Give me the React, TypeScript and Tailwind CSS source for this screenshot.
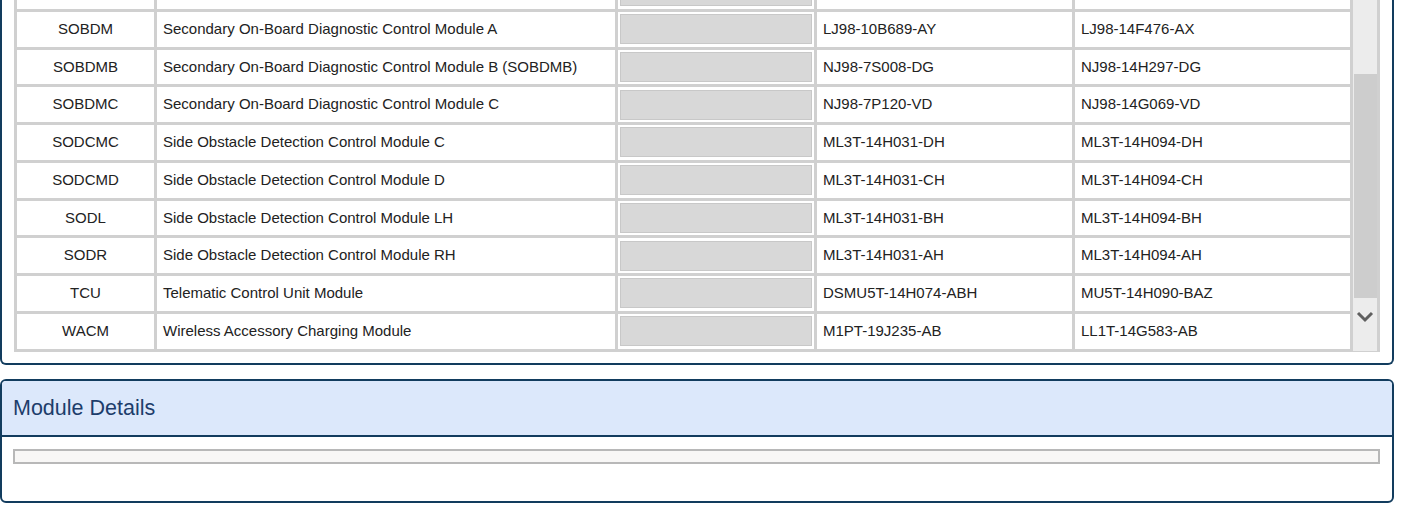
import React from "react";

type ModuleRow = {
  code: string;
  name: string;
  partNo: string;
  strategy: string;
};

const rows: ModuleRow[] = [
  { code: "SOBDM", name: "Secondary On-Board Diagnostic Control Module A", partNo: "LJ98-10B689-AY", strategy: "LJ98-14F476-AX" },
  { code: "SOBDMB", name: "Secondary On-Board Diagnostic Control Module B (SOBDMB)", partNo: "NJ98-7S008-DG", strategy: "NJ98-14H297-DG" },
  { code: "SOBDMC", name: "Secondary On-Board Diagnostic Control Module C", partNo: "NJ98-7P120-VD", strategy: "NJ98-14G069-VD" },
  { code: "SODCMC", name: "Side Obstacle Detection Control Module C", partNo: "ML3T-14H031-DH", strategy: "ML3T-14H094-DH" },
  { code: "SODCMD", name: "Side Obstacle Detection Control Module D", partNo: "ML3T-14H031-CH", strategy: "ML3T-14H094-CH" },
  { code: "SODL", name: "Side Obstacle Detection Control Module LH", partNo: "ML3T-14H031-BH", strategy: "ML3T-14H094-BH" },
  { code: "SODR", name: "Side Obstacle Detection Control Module RH", partNo: "ML3T-14H031-AH", strategy: "ML3T-14H094-AH" },
  { code: "TCU", name: "Telematic Control Unit Module", partNo: "DSMU5T-14H074-ABH", strategy: "MU5T-14H090-BAZ" },
  { code: "WACM", name: "Wireless Accessory Charging Module", partNo: "M1PT-19J235-AB", strategy: "LL1T-14G583-AB" },
];

function ModuleTableRow({ row }: { row?: ModuleRow }) {
  return (
    <tr className="h-[34.75px]">
      <td className="bg-white text-center">{row?.code}</td>
      <td className="bg-white pl-[6px]">{row?.name}</td>
      <td className="bg-white p-[2px]">
        <div className="h-[30px] bg-[#d8d8d8] border border-[#c8c8c8]" />
      </td>
      <td className="bg-white pl-[6px]">{row?.partNo}</td>
      <td className="bg-white pl-[6px]">{row?.strategy}</td>
    </tr>
  );
}

function Scrollbar() {
  return (
    <div className="w-[24px] flex flex-col bg-[#ececec]">
      <div className="h-[74px]" />
      <div className="h-[224px] ml-[1px] bg-[#cdcdcd]" />
      <div className="flex-1 flex justify-center pt-[13px]">
        <svg width="18" height="12" viewBox="0 0 18 12">
          <path d="M2 2 L9 9 L16 2" fill="none" stroke="#5f5f5f" strokeWidth="3" />
        </svg>
      </div>
    </div>
  );
}

export default function App() {
  return (
    <div
      className="w-[1404px] h-[523px] overflow-hidden bg-white text-[#222]"
      style={{ fontFamily: '"Liberation Sans", Arial, sans-serif' }}
    >
      {/* module list panel, scrolled near the bottom */}
      <div className="w-[1394px] border-x-2 border-b-2 border-[#123c5e] rounded-b-[6px] pl-[12px] pr-[12px] pb-[11px]">
        <div className="flex h-[352px] border-b border-r-[3px] border-[#d0d0d0]">
          <div className="w-[1339px] overflow-hidden">
            <table className="-mt-[29px] table-fixed border-separate border-spacing-[3px] bg-[#d0d0d0] w-[1339px] text-[15px]">
              <colgroup>
                <col className="w-[137px]" />
                <col className="w-[458px]" />
                <col className="w-[196px]" />
                <col className="w-[255px]" />
                <col className="w-[275px]" />
              </colgroup>
              <tbody>
                <ModuleTableRow />
                {rows.map((r) => (
                  <ModuleTableRow key={r.code} row={r} />
                ))}
              </tbody>
            </table>
          </div>
          <Scrollbar />
        </div>
      </div>

      {/* module details */}
      <div className="mt-[14px] w-[1394px] border-2 border-[#123c5e] rounded-[6px] overflow-hidden">
        <div className="h-[56px] flex items-center pl-[11px] bg-[#dce8fb] border-b-2 border-[#123c5e]">
          <span className="text-[21.5px] text-[#1d3d6b]">Module Details</span>
        </div>
        <div className="pl-[11px] pr-[12px] pt-[12px] pb-[37px]">
          <div className="h-[15px] bg-[#f8f7f6] border-2 border-[#b8b8b8]" />
        </div>
      </div>
    </div>
  );
}
